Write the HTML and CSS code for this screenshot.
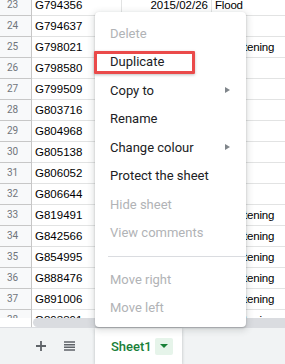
FILE: index.html
```html
<!DOCTYPE html>
<html lang="en">

<head>
  <meta charset="UTF-8">
  <meta name="viewport" content="width=device-width, initial-scale=1.0">
  <title>Sheet1</title>
  <link rel="stylesheet" href="styles.css">
</head>

<body>
  <div class="sheet">
    <div class="grid">
      <div class="rows">
        <div class="row"><div class="rh">23</div><div class="c">G794356</div><div class="c date">2015/02/26</div><div class="c">Flood</div></div>
        <div class="row"><div class="rh">24</div><div class="c">G794637</div><div class="c date"></div><div class="c"></div></div>
        <div class="row"><div class="rh">25</div><div class="c">G798021</div><div class="c date">2015/03/02</div><div class="c">Threatening</div></div>
        <div class="row"><div class="rh">26</div><div class="c">G798580</div><div class="c date"></div><div class="c"></div></div>
        <div class="row"><div class="rh">27</div><div class="c">G799509</div><div class="c date"></div><div class="c"></div></div>
        <div class="row"><div class="rh">28</div><div class="c">G803716</div><div class="c date"></div><div class="c"></div></div>
        <div class="row"><div class="rh">29</div><div class="c">G804968</div><div class="c date"></div><div class="c"></div></div>
        <div class="row"><div class="rh">30</div><div class="c">G805138</div><div class="c date"></div><div class="c"></div></div>
        <div class="row"><div class="rh">31</div><div class="c">G806052</div><div class="c date"></div><div class="c"></div></div>
        <div class="row"><div class="rh">32</div><div class="c">G806644</div><div class="c date"></div><div class="c"></div></div>
        <div class="row"><div class="rh">33</div><div class="c">G819491</div><div class="c date"></div><div class="c">Threatening</div></div>
        <div class="row"><div class="rh">34</div><div class="c">G842566</div><div class="c date"></div><div class="c">Threatening</div></div>
        <div class="row"><div class="rh">35</div><div class="c">G854995</div><div class="c date"></div><div class="c">Threatening</div></div>
        <div class="row"><div class="rh">36</div><div class="c">G888476</div><div class="c date"></div><div class="c">Threatening</div></div>
        <div class="row"><div class="rh">37</div><div class="c">G891006</div><div class="c date"></div><div class="c">Threatening</div></div>
        <div class="row"><div class="rh">38</div><div class="c">G893391</div><div class="c date"></div><div class="c">Threatening</div></div>
      </div>
    </div>

    <div class="hscroll">
      <div class="hscroll-head"></div>
      <div class="thumb"></div>
    </div>

    <div class="tabs">
      <div class="tab-btn">
        <svg width="12" height="12" viewBox="0 0 12 12"><path d="M6 1v10M1 6h10" stroke="#5f6368" stroke-width="1.8" fill="none" /></svg>
      </div>
      <div class="tab-btn">
        <svg width="11" height="10" viewBox="0 0 11 10"><path d="M0 1h11M0 3.7h11M0 6.3h11M0 9h11" stroke="#5f6368" stroke-width="1.5" fill="none" /></svg>
      </div>
      <div class="tab">
        <span>Sheet1</span>
        <span class="tab-drop"><span class="tri-down"></span></span>
      </div>
    </div>

    <div class="menu">
      <div class="item disabled">Delete</div>
      <div class="item">Duplicate</div>
      <div class="item">Copy to<span class="arrow"></span></div>
      <div class="item">Rename</div>
      <div class="item">Change colour<span class="arrow"></span></div>
      <div class="item">Protect the sheet</div>
      <div class="item disabled">Hide sheet</div>
      <div class="item disabled">View comments</div>
      <div class="sep"></div>
      <div class="item disabled">Move right</div>
      <div class="item disabled">Move left</div>
    </div>

    <div class="highlight"></div>
  </div>
</body>

</html>
```

FILE: styles.css
```css
body {
  margin: 0;
  font-family: 'Liberation Sans', Arial, sans-serif;
  background-color: white;
}

.sheet {
  position: relative;
  width: 285px;
  height: 364px;
  overflow: hidden;
}

.grid {
  height: 318px;
  overflow: hidden;
}

.rows {
  margin-top: -5px;
}

.row {
  display: grid;
  grid-template-columns: 32px 90px 90px 90px;
  height: 21px;
}

.rh {
  box-sizing: border-box;
  border-right: 1px solid #c7c7c7;
  border-bottom: 1px solid #c7c7c7;
  background-color: #f8f9fa;
  color: #70757a;
  font-family: Roboto, Arial, sans-serif;
  font-size: 10px;
  line-height: 20px;
  padding-left: 7px;
}

.c {
  box-sizing: border-box;
  border-right: 1px solid #e2e3e3;
  border-bottom: 1px solid #e2e3e3;
  font-size: 11.5px;
  line-height: 20px;
  color: #000;
  padding: 0 3px;
  white-space: nowrap;
}

.date {
  text-align: right;
}

.row .c:last-child {
  border-right: none;
  overflow: visible;
  width: 200px;
  letter-spacing: -0.2px;
}

.hscroll {
  display: flex;
  height: 9px;
}

.hscroll-head {
  width: 31px;
  border-right: 1px solid #c7c7c7;
  background-color: white;
}

.thumb {
  flex: 1;
  margin-left: 1px;
  background-color: #dadce0;
  border-radius: 5px 0 0 5px;
}

.tabs {
  display: flex;
  align-items: stretch;
  height: 37px;
  box-sizing: border-box;
  border-top: 1px solid #dadce0;
  background-color: #f1f3f4;
  padding-left: 27px;
}

.tab-btn {
  width: 28px;
  display: flex;
  align-items: center;
  justify-content: center;
}

.tab {
  margin-left: 12px;
  width: 87px;
  box-sizing: border-box;
  background-color: white;
  box-shadow: 0 1px 3px rgba(60, 64, 67, 0.3);
  display: flex;
  align-items: center;
  padding-left: 16px;
  color: #188038;
  font-family: Roboto, Arial, sans-serif;
  font-size: 13px;
  font-weight: 500;
}

.tab-drop {
  margin-left: 3px;
  width: 18px;
  height: 17px;
  background-color: #e6f4ea;
  border-radius: 2px;
  display: flex;
  align-items: center;
  justify-content: center;
}

.tri-down {
  border-top: 4px solid #188038;
  border-left: 4px solid transparent;
  border-right: 4px solid transparent;
}

.menu {
  position: absolute;
  left: 95px;
  top: 12px;
  width: 151px;
  height: 315px;
  box-sizing: border-box;
  padding-top: 7px;
  background-color: white;
  border-radius: 4px;
  box-shadow: 0 2px 6px 2px rgba(60, 64, 67, 0.15), 0 1px 2px rgba(60, 64, 67, 0.3);
  font-family: Roboto, Arial, sans-serif;
  font-size: 13px;
  color: #202124;
}

.item {
  display: flex;
  align-items: center;
  height: 28.5px;
  padding-left: 15px;
  padding-right: 16px;
}

.item.disabled {
  color: #b1b3b6;
}

.arrow {
  margin-left: auto;
  border-left: 5px solid #80868b;
  border-top: 3.5px solid transparent;
  border-bottom: 3.5px solid transparent;
}

.sep {
  height: 1px;
  background-color: #dadce0;
  margin: 9px 0 8px 13px;
}

.highlight {
  position: absolute;
  left: 94px;
  top: 51px;
  width: 101px;
  height: 23px;
  box-sizing: border-box;
  border: 3px solid #ea4a4a;
  border-radius: 1px;
  box-shadow: 0 1px 3px rgba(0, 0, 0, 0.25);
}
```
